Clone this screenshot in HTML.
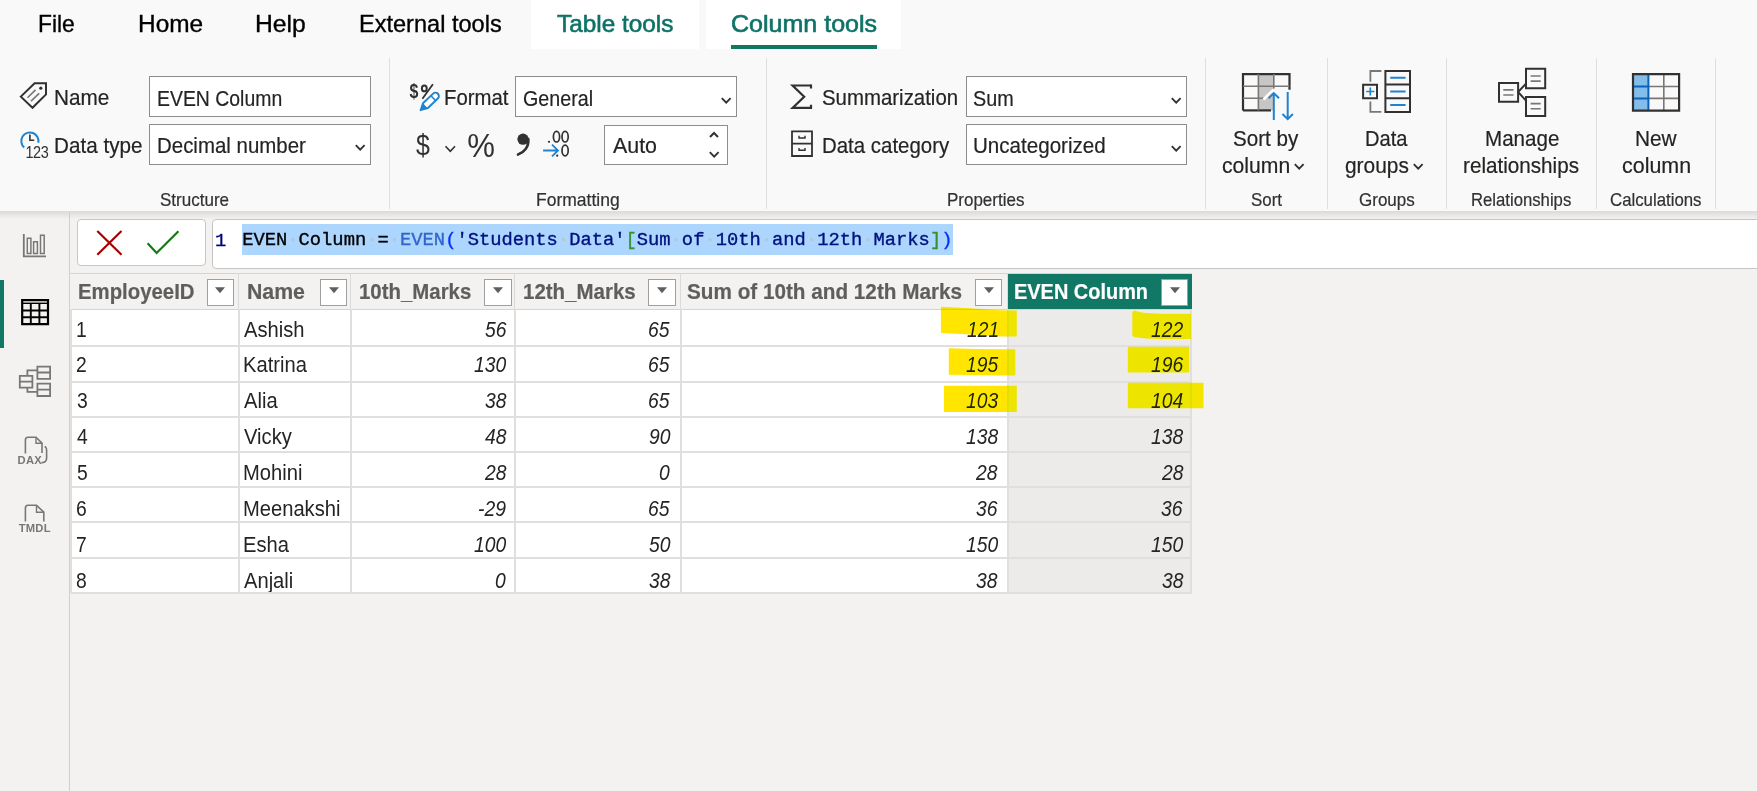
<!DOCTYPE html><html><head><meta charset="utf-8"><style>
html,body{margin:0;padding:0;}
body{width:1757px;height:791px;position:relative;overflow:hidden;background:#f3f2f1;font-family:'Liberation Sans', sans-serif;}
div{-webkit-text-stroke:0.2px currentColor;}
</style></head><body>
<div style="position:absolute;left:0px;top:0px;width:1757px;height:211px;background:#f9f9f9;"></div><div style="position:absolute;left:531px;top:0px;width:168px;height:48.5px;background:#ffffff;"></div><div style="position:absolute;left:706px;top:0px;width:195px;height:48.5px;background:#ffffff;"></div><div style="position:absolute;left:731.4px;top:44.5px;width:145.30000000000007px;height:4.0px;background:#117865;"></div><div style="position:absolute;left:0px;top:211px;width:1757px;height:8px;background:linear-gradient(#dcdad8,#f3f2f1);"></div><div style="position:absolute;top:9.72px;font-family:'Liberation Sans', sans-serif;font-size:24.13px;line-height:28.96px;color:#000;white-space:pre;left:37.57px;transform:scaleX(0.9461);transform-origin:0 0;-webkit-text-stroke:0.35px currentColor;">File</div><div style="position:absolute;top:9.72px;font-family:'Liberation Sans', sans-serif;font-size:24.13px;line-height:28.96px;color:#000;white-space:pre;left:138.25px;transform:scaleX(1.0117);transform-origin:0 0;-webkit-text-stroke:0.35px currentColor;">Home</div><div style="position:absolute;top:9.72px;font-family:'Liberation Sans', sans-serif;font-size:24.13px;line-height:28.96px;color:#000;white-space:pre;left:255.12px;transform:scaleX(1.0238);transform-origin:0 0;-webkit-text-stroke:0.35px currentColor;">Help</div><div style="position:absolute;top:9.72px;font-family:'Liberation Sans', sans-serif;font-size:24.13px;line-height:28.96px;color:#000;white-space:pre;left:359.32px;transform:scaleX(0.9760);transform-origin:0 0;-webkit-text-stroke:0.35px currentColor;">External tools</div><div style="position:absolute;top:9.72px;font-family:'Liberation Sans', sans-serif;font-size:24.13px;line-height:28.96px;color:#0e7266;white-space:pre;left:557.11px;transform:scaleX(1.0087);transform-origin:0 0;-webkit-text-stroke:0.6px currentColor;">Table tools</div><div style="position:absolute;top:9.72px;font-family:'Liberation Sans', sans-serif;font-size:24.13px;line-height:28.96px;color:#0e7266;white-space:pre;left:730.55px;transform:scaleX(1.0379);transform-origin:0 0;-webkit-text-stroke:0.6px currentColor;">Column tools</div><div style="position:absolute;left:389px;top:58px;width:1px;height:151px;background:#e1dfdd;"></div><div style="position:absolute;left:766px;top:58px;width:1px;height:151px;background:#e1dfdd;"></div><div style="position:absolute;left:1205px;top:58px;width:1px;height:151px;background:#e1dfdd;"></div><div style="position:absolute;left:1327px;top:58px;width:1px;height:151px;background:#e1dfdd;"></div><div style="position:absolute;left:1446px;top:58px;width:1px;height:151px;background:#e1dfdd;"></div><div style="position:absolute;left:1596px;top:58px;width:1px;height:151px;background:#e1dfdd;"></div><div style="position:absolute;left:1715px;top:58px;width:1px;height:151px;background:#e1dfdd;"></div><div style="position:absolute;top:85.22px;font-family:'Liberation Sans', sans-serif;font-size:21.8px;line-height:26.16px;color:#252423;white-space:pre;left:54.44px;transform:scaleX(0.9516);transform-origin:0 0;">Name</div><div style="position:absolute;top:133.22px;font-family:'Liberation Sans', sans-serif;font-size:21.8px;line-height:26.16px;color:#252423;white-space:pre;left:54.35px;transform:scaleX(0.9482);transform-origin:0 0;">Data type</div><div style="position:absolute;left:149.2px;top:76px;width:221.8px;height:41px;background:#fff;border:1.5px solid #8f8d8b;box-sizing:border-box;"></div><div style="position:absolute;left:149.2px;top:124px;width:221.8px;height:41px;background:#fff;border:1.5px solid #8f8d8b;box-sizing:border-box;"></div><div style="position:absolute;top:85.72px;font-family:'Liberation Sans', sans-serif;font-size:21.8px;line-height:26.16px;color:#252423;white-space:pre;left:157.45px;transform:scaleX(0.8911);transform-origin:0 0;">EVEN Column</div><div style="position:absolute;top:133.42px;font-family:'Liberation Sans', sans-serif;font-size:21.8px;line-height:26.16px;color:#252423;white-space:pre;left:157.36px;transform:scaleX(0.9378);transform-origin:0 0;">Decimal number</div><svg style="position:absolute;left:355px;top:144px;" width="11" height="7" viewBox="0 0 11 7"><path d="M0.8 1.2 L5.2 5.6 L9.6 1.2" fill="none" stroke="#323130" stroke-width="1.9"/></svg><div style="position:absolute;top:190.25px;font-family:'Liberation Sans', sans-serif;font-size:17.59px;line-height:21.11px;color:#323130;white-space:pre;left:159.73px;transform:scaleX(0.9680);transform-origin:0 0;">Structure</div><div style="position:absolute;top:85.02px;font-family:'Liberation Sans', sans-serif;font-size:21.8px;line-height:26.16px;color:#252423;white-space:pre;left:444.17px;transform:scaleX(0.9322);transform-origin:0 0;">Format</div><div style="position:absolute;left:515.2px;top:76px;width:221.79999999999995px;height:41px;background:#fff;border:1.5px solid #8f8d8b;box-sizing:border-box;"></div><div style="position:absolute;top:85.72px;font-family:'Liberation Sans', sans-serif;font-size:21.8px;line-height:26.16px;color:#252423;white-space:pre;left:523.32px;transform:scaleX(0.9027);transform-origin:0 0;">General</div><svg style="position:absolute;left:721px;top:97px;" width="11" height="7" viewBox="0 0 11 7"><path d="M0.8 1.2 L5.2 5.6 L9.6 1.2" fill="none" stroke="#323130" stroke-width="1.9"/></svg><div style="position:absolute;left:604.2px;top:125px;width:123.39999999999998px;height:40px;background:#fff;border:1.5px solid #8f8d8b;box-sizing:border-box;"></div><div style="position:absolute;top:133.22px;font-family:'Liberation Sans', sans-serif;font-size:21.8px;line-height:26.16px;color:#252423;white-space:pre;left:613.4px;transform:scaleX(0.9811);transform-origin:0 0;">Auto</div><svg style="position:absolute;left:709px;top:131px;" width="11" height="7" viewBox="0 0 11 7"><path d="M1 6 L5 2 L9 6" fill="none" stroke="#323130" stroke-width="2"/></svg><svg style="position:absolute;left:709px;top:151.3px;" width="11" height="7" viewBox="0 0 11 7"><path d="M0.8 1.2 L5.2 5.6 L9.6 1.2" fill="none" stroke="#323130" stroke-width="1.9"/></svg><div style="position:absolute;top:190.25px;font-family:'Liberation Sans', sans-serif;font-size:17.59px;line-height:21.11px;color:#323130;white-space:pre;left:535.9px;transform:scaleX(0.9961);transform-origin:0 0;">Formatting</div><div style="position:absolute;top:85.22px;font-family:'Liberation Sans', sans-serif;font-size:21.8px;line-height:26.16px;color:#252423;white-space:pre;left:822.48px;transform:scaleX(0.9362);transform-origin:0 0;">Summarization</div><div style="position:absolute;top:133.22px;font-family:'Liberation Sans', sans-serif;font-size:21.8px;line-height:26.16px;color:#252423;white-space:pre;left:821.76px;transform:scaleX(0.9375);transform-origin:0 0;">Data category</div><div style="position:absolute;left:965.5px;top:76px;width:221.5px;height:41px;background:#fff;border:1.5px solid #8f8d8b;box-sizing:border-box;"></div><div style="position:absolute;left:965.5px;top:124px;width:221.5px;height:41px;background:#fff;border:1.5px solid #8f8d8b;box-sizing:border-box;"></div><div style="position:absolute;top:86.22px;font-family:'Liberation Sans', sans-serif;font-size:21.8px;line-height:26.16px;color:#252423;white-space:pre;left:973.11px;transform:scaleX(0.9079);transform-origin:0 0;">Sum</div><div style="position:absolute;top:133.42px;font-family:'Liberation Sans', sans-serif;font-size:21.8px;line-height:26.16px;color:#252423;white-space:pre;left:972.76px;transform:scaleX(0.9442);transform-origin:0 0;">Uncategorized</div><svg style="position:absolute;left:1171px;top:97px;" width="11" height="7" viewBox="0 0 11 7"><path d="M0.8 1.2 L5.2 5.6 L9.6 1.2" fill="none" stroke="#323130" stroke-width="1.9"/></svg><svg style="position:absolute;left:1171px;top:145px;" width="11" height="7" viewBox="0 0 11 7"><path d="M0.8 1.2 L5.2 5.6 L9.6 1.2" fill="none" stroke="#323130" stroke-width="1.9"/></svg><div style="position:absolute;top:190.25px;font-family:'Liberation Sans', sans-serif;font-size:17.59px;line-height:21.11px;color:#323130;white-space:pre;left:947.04px;transform:scaleX(0.9658);transform-origin:0 0;">Properties</div><div style="position:absolute;top:126.12px;font-family:'Liberation Sans', sans-serif;font-size:21.8px;line-height:26.16px;color:#252423;white-space:pre;left:1233.37px;transform:scaleX(0.9467);transform-origin:0 0;">Sort by</div><div style="position:absolute;top:153.02px;font-family:'Liberation Sans', sans-serif;font-size:21.8px;line-height:26.16px;color:#252423;white-space:pre;left:1222.35px;transform:scaleX(0.9703);transform-origin:0 0;">column</div><svg style="position:absolute;left:1294px;top:163px;" width="11" height="7" viewBox="0 0 11 7"><path d="M0.8 1.2 L5.2 5.6 L9.6 1.2" fill="none" stroke="#323130" stroke-width="1.9"/></svg><div style="position:absolute;top:190.04px;font-family:'Liberation Sans', sans-serif;font-size:17.59px;line-height:21.11px;color:#323130;white-space:pre;left:1250.74px;transform:scaleX(0.9615);transform-origin:0 0;">Sort</div><div style="position:absolute;top:126.12px;font-family:'Liberation Sans', sans-serif;font-size:21.8px;line-height:26.16px;color:#252423;white-space:pre;left:1365.39px;transform:scaleX(0.9219);transform-origin:0 0;">Data</div><div style="position:absolute;top:153.02px;font-family:'Liberation Sans', sans-serif;font-size:21.8px;line-height:26.16px;color:#252423;white-space:pre;left:1344.96px;transform:scaleX(0.9588);transform-origin:0 0;">groups</div><svg style="position:absolute;left:1413px;top:163px;" width="11" height="7" viewBox="0 0 11 7"><path d="M0.8 1.2 L5.2 5.6 L9.6 1.2" fill="none" stroke="#323130" stroke-width="1.9"/></svg><div style="position:absolute;top:190.04px;font-family:'Liberation Sans', sans-serif;font-size:17.59px;line-height:21.11px;color:#323130;white-space:pre;left:1359.05px;transform:scaleX(0.9681);transform-origin:0 0;">Groups</div><div style="position:absolute;top:126.12px;font-family:'Liberation Sans', sans-serif;font-size:21.8px;line-height:26.16px;color:#252423;white-space:pre;left:1484.75px;transform:scaleX(0.9436);transform-origin:0 0;">Manage</div><div style="position:absolute;top:153.02px;font-family:'Liberation Sans', sans-serif;font-size:21.8px;line-height:26.16px;color:#252423;white-space:pre;left:1463.06px;transform:scaleX(0.9481);transform-origin:0 0;">relationships</div><div style="position:absolute;top:190.04px;font-family:'Liberation Sans', sans-serif;font-size:17.59px;line-height:21.11px;color:#323130;white-space:pre;left:1470.86px;transform:scaleX(0.9499);transform-origin:0 0;">Relationships</div><div style="position:absolute;top:126.12px;font-family:'Liberation Sans', sans-serif;font-size:21.8px;line-height:26.16px;color:#252423;white-space:pre;left:1635.03px;transform:scaleX(0.9555);transform-origin:0 0;">New</div><div style="position:absolute;top:153.02px;font-family:'Liberation Sans', sans-serif;font-size:21.8px;line-height:26.16px;color:#252423;white-space:pre;left:1621.94px;transform:scaleX(0.9835);transform-origin:0 0;">column</div><div style="position:absolute;top:190.04px;font-family:'Liberation Sans', sans-serif;font-size:17.59px;line-height:21.11px;color:#323130;white-space:pre;left:1610.36px;transform:scaleX(0.9558);transform-origin:0 0;">Calculations</div><div style="position:absolute;left:0px;top:219px;width:1757px;height:572px;background:#f3f2f1;"></div><div style="position:absolute;left:69px;top:211.5px;width:1px;height:579.5px;background:#d2d0ce;"></div><div style="position:absolute;left:0px;top:280px;width:4px;height:68px;background:#117865;"></div><div style="position:absolute;left:77px;top:218.5px;width:129px;height:47.5px;background:#fff;border:1.5px solid #c8c6c4;border-radius:4px;box-sizing:border-box;"></div><div style="position:absolute;left:212px;top:218.5px;width:1588px;height:50.5px;background:#fff;border:1.5px solid #c8c6c4;border-radius:4px;box-sizing:border-box;"></div><div style="position:absolute;top:229.52px;font-family:'Liberation Mono', monospace;font-size:18.8px;line-height:22.56px;color:#000080;white-space:pre;left:215px;-webkit-text-stroke:0.35px currentColor;">1</div><div style="position:absolute;left:242px;top:224px;width:711px;height:31px;background:#add6ff;"></div><div style="position:absolute;left:70px;top:273px;width:1121.7px;height:36.30000000000001px;background:#f3f2f1;"></div><div style="position:absolute;left:70.5px;top:309.3px;width:937.0px;height:283.7px;background:#fff;"></div><div style="position:absolute;left:1007.5px;top:309.3px;width:184.20000000000005px;height:283.7px;background:#edebe9;"></div><div style="position:absolute;left:1007.5px;top:274px;width:184.70000000000005px;height:36.0px;background:#117865;"></div><div style="position:absolute;top:278.00px;font-family:'Liberation Sans', sans-serif;font-size:22.67px;line-height:27.2px;color:#605e5c;white-space:pre;font-weight:700;left:77.68px;transform:scaleX(0.8985);transform-origin:0 0;">EmployeeID</div><div style="position:absolute;top:278.00px;font-family:'Liberation Sans', sans-serif;font-size:22.67px;line-height:27.2px;color:#605e5c;white-space:pre;font-weight:700;left:247.12px;transform:scaleX(0.9392);transform-origin:0 0;">Name</div><div style="position:absolute;top:278.00px;font-family:'Liberation Sans', sans-serif;font-size:22.67px;line-height:27.2px;color:#605e5c;white-space:pre;font-weight:700;left:358.77px;transform:scaleX(0.9008);transform-origin:0 0;">10th_Marks</div><div style="position:absolute;top:278.00px;font-family:'Liberation Sans', sans-serif;font-size:22.67px;line-height:27.2px;color:#605e5c;white-space:pre;font-weight:700;left:522.97px;transform:scaleX(0.9041);transform-origin:0 0;">12th_Marks</div><div style="position:absolute;top:278.00px;font-family:'Liberation Sans', sans-serif;font-size:22.67px;line-height:27.2px;color:#605e5c;white-space:pre;font-weight:700;left:687.18px;transform:scaleX(0.9141);transform-origin:0 0;">Sum of 10th and 12th Marks</div><div style="position:absolute;top:278.00px;font-family:'Liberation Sans', sans-serif;font-size:22.67px;line-height:27.2px;color:#fff;white-space:pre;font-weight:700;left:1013.7px;transform:scaleX(0.8800);transform-origin:0 0;">EVEN Column</div><div style="position:absolute;left:206.6px;top:278.8px;width:27.400000000000006px;height:27.0px;background:#fff;border:1.5px solid #a19f9d;box-sizing:border-box;"></div><svg style="position:absolute;left:215.29999999999998px;top:287.2px;" width="10" height="7" viewBox="0 0 10 7"><path d="M0 0.3 L10 0.3 L5 6.3 Z" fill="#605e5c"/></svg><div style="position:absolute;left:320px;top:278.8px;width:27.399999999999977px;height:27.0px;background:#fff;border:1.5px solid #a19f9d;box-sizing:border-box;"></div><svg style="position:absolute;left:328.7px;top:287.2px;" width="10" height="7" viewBox="0 0 10 7"><path d="M0 0.3 L10 0.3 L5 6.3 Z" fill="#605e5c"/></svg><div style="position:absolute;left:484.2px;top:278.8px;width:27.399999999999977px;height:27.0px;background:#fff;border:1.5px solid #a19f9d;box-sizing:border-box;"></div><svg style="position:absolute;left:492.9px;top:287.2px;" width="10" height="7" viewBox="0 0 10 7"><path d="M0 0.3 L10 0.3 L5 6.3 Z" fill="#605e5c"/></svg><div style="position:absolute;left:648.2px;top:278.8px;width:27.399999999999977px;height:27.0px;background:#fff;border:1.5px solid #a19f9d;box-sizing:border-box;"></div><svg style="position:absolute;left:656.9000000000001px;top:287.2px;" width="10" height="7" viewBox="0 0 10 7"><path d="M0 0.3 L10 0.3 L5 6.3 Z" fill="#605e5c"/></svg><div style="position:absolute;left:975px;top:278.8px;width:27.399999999999977px;height:27.0px;background:#fff;border:1.5px solid #a19f9d;box-sizing:border-box;"></div><svg style="position:absolute;left:983.7px;top:287.2px;" width="10" height="7" viewBox="0 0 10 7"><path d="M0 0.3 L10 0.3 L5 6.3 Z" fill="#605e5c"/></svg><div style="position:absolute;left:1161px;top:278.8px;width:27.40000000000009px;height:27.0px;background:#fff;border:1.5px solid #a19f9d;box-sizing:border-box;"></div><svg style="position:absolute;left:1169.7px;top:287.2px;" width="10" height="7" viewBox="0 0 10 7"><path d="M0 0.3 L10 0.3 L5 6.3 Z" fill="#605e5c"/></svg><div style="position:absolute;top:317.63px;font-family:'Liberation Sans', sans-serif;font-size:21.45px;line-height:25.74px;color:#252423;white-space:pre;left:75.85px;transform:scaleX(0.9000);transform-origin:0 0;-webkit-text-stroke:0;">1</div><div style="position:absolute;top:317.63px;font-family:'Liberation Sans', sans-serif;font-size:21.45px;line-height:25.74px;color:#252423;white-space:pre;left:244.2px;transform:scaleX(0.9400);transform-origin:0 0;-webkit-text-stroke:0;">Ashish</div><div style="position:absolute;top:317.63px;font-family:'Liberation Sans', sans-serif;font-size:21.45px;line-height:25.74px;color:#252423;white-space:pre;font-style:italic;left:484.57px;transform:scaleX(0.9000);transform-origin:0 0;-webkit-text-stroke:0;">56</div><div style="position:absolute;top:317.63px;font-family:'Liberation Sans', sans-serif;font-size:21.45px;line-height:25.74px;color:#252423;white-space:pre;font-style:italic;left:648.48px;transform:scaleX(0.9000);transform-origin:0 0;-webkit-text-stroke:0;">65</div><div style="position:absolute;top:317.63px;font-family:'Liberation Sans', sans-serif;font-size:21.45px;line-height:25.74px;color:#252423;white-space:pre;font-style:italic;left:967.3px;transform:scaleX(0.9000);transform-origin:0 0;-webkit-text-stroke:0;">121</div><div style="position:absolute;top:317.63px;font-family:'Liberation Sans', sans-serif;font-size:21.45px;line-height:25.74px;color:#252423;white-space:pre;font-style:italic;left:1151.05px;transform:scaleX(0.9000);transform-origin:0 0;-webkit-text-stroke:0;">122</div><div style="position:absolute;top:353.43px;font-family:'Liberation Sans', sans-serif;font-size:21.45px;line-height:25.74px;color:#252423;white-space:pre;left:76.33px;transform:scaleX(0.9000);transform-origin:0 0;-webkit-text-stroke:0;">2</div><div style="position:absolute;top:353.43px;font-family:'Liberation Sans', sans-serif;font-size:21.45px;line-height:25.74px;color:#252423;white-space:pre;left:242.59px;transform:scaleX(0.9400);transform-origin:0 0;-webkit-text-stroke:0;">Katrina</div><div style="position:absolute;top:353.43px;font-family:'Liberation Sans', sans-serif;font-size:21.45px;line-height:25.74px;color:#252423;white-space:pre;font-style:italic;left:473.95px;transform:scaleX(0.9000);transform-origin:0 0;-webkit-text-stroke:0;">130</div><div style="position:absolute;top:353.43px;font-family:'Liberation Sans', sans-serif;font-size:21.45px;line-height:25.74px;color:#252423;white-space:pre;font-style:italic;left:648.48px;transform:scaleX(0.9000);transform-origin:0 0;-webkit-text-stroke:0;">65</div><div style="position:absolute;top:353.43px;font-family:'Liberation Sans', sans-serif;font-size:21.45px;line-height:25.74px;color:#252423;white-space:pre;font-style:italic;left:965.56px;transform:scaleX(0.9000);transform-origin:0 0;-webkit-text-stroke:0;">195</div><div style="position:absolute;top:353.43px;font-family:'Liberation Sans', sans-serif;font-size:21.45px;line-height:25.74px;color:#252423;white-space:pre;font-style:italic;left:1150.76px;transform:scaleX(0.9000);transform-origin:0 0;-webkit-text-stroke:0;">196</div><div style="position:absolute;top:388.83px;font-family:'Liberation Sans', sans-serif;font-size:21.45px;line-height:25.74px;color:#252423;white-space:pre;left:76.53px;transform:scaleX(0.9000);transform-origin:0 0;-webkit-text-stroke:0;">3</div><div style="position:absolute;top:388.83px;font-family:'Liberation Sans', sans-serif;font-size:21.45px;line-height:25.74px;color:#252423;white-space:pre;left:244.2px;transform:scaleX(0.9400);transform-origin:0 0;-webkit-text-stroke:0;">Alia</div><div style="position:absolute;top:388.83px;font-family:'Liberation Sans', sans-serif;font-size:21.45px;line-height:25.74px;color:#252423;white-space:pre;font-style:italic;left:484.67px;transform:scaleX(0.9000);transform-origin:0 0;-webkit-text-stroke:0;">38</div><div style="position:absolute;top:388.83px;font-family:'Liberation Sans', sans-serif;font-size:21.45px;line-height:25.74px;color:#252423;white-space:pre;font-style:italic;left:648.48px;transform:scaleX(0.9000);transform-origin:0 0;-webkit-text-stroke:0;">65</div><div style="position:absolute;top:388.83px;font-family:'Liberation Sans', sans-serif;font-size:21.45px;line-height:25.74px;color:#252423;white-space:pre;font-style:italic;left:965.75px;transform:scaleX(0.9000);transform-origin:0 0;-webkit-text-stroke:0;">103</div><div style="position:absolute;top:388.83px;font-family:'Liberation Sans', sans-serif;font-size:21.45px;line-height:25.74px;color:#252423;white-space:pre;font-style:italic;left:1151.43px;transform:scaleX(0.9000);transform-origin:0 0;-webkit-text-stroke:0;">104</div><div style="position:absolute;top:424.73px;font-family:'Liberation Sans', sans-serif;font-size:21.45px;line-height:25.74px;color:#252423;white-space:pre;left:76.91px;transform:scaleX(0.9000);transform-origin:0 0;-webkit-text-stroke:0;">4</div><div style="position:absolute;top:424.73px;font-family:'Liberation Sans', sans-serif;font-size:21.45px;line-height:25.74px;color:#252423;white-space:pre;left:244.1px;transform:scaleX(0.9400);transform-origin:0 0;-webkit-text-stroke:0;">Vicky</div><div style="position:absolute;top:424.73px;font-family:'Liberation Sans', sans-serif;font-size:21.45px;line-height:25.74px;color:#252423;white-space:pre;font-style:italic;left:484.67px;transform:scaleX(0.9000);transform-origin:0 0;-webkit-text-stroke:0;">48</div><div style="position:absolute;top:424.73px;font-family:'Liberation Sans', sans-serif;font-size:21.45px;line-height:25.74px;color:#252423;white-space:pre;font-style:italic;left:648.67px;transform:scaleX(0.9000);transform-origin:0 0;-webkit-text-stroke:0;">90</div><div style="position:absolute;top:424.73px;font-family:'Liberation Sans', sans-serif;font-size:21.45px;line-height:25.74px;color:#252423;white-space:pre;font-style:italic;left:965.75px;transform:scaleX(0.9000);transform-origin:0 0;-webkit-text-stroke:0;">138</div><div style="position:absolute;top:424.73px;font-family:'Liberation Sans', sans-serif;font-size:21.45px;line-height:25.74px;color:#252423;white-space:pre;font-style:italic;left:1150.85px;transform:scaleX(0.9000);transform-origin:0 0;-webkit-text-stroke:0;">138</div><div style="position:absolute;top:461.23px;font-family:'Liberation Sans', sans-serif;font-size:21.45px;line-height:25.74px;color:#252423;white-space:pre;left:76.53px;transform:scaleX(0.9000);transform-origin:0 0;-webkit-text-stroke:0;">5</div><div style="position:absolute;top:461.23px;font-family:'Liberation Sans', sans-serif;font-size:21.45px;line-height:25.74px;color:#252423;white-space:pre;left:242.59px;transform:scaleX(0.9400);transform-origin:0 0;-webkit-text-stroke:0;">Mohini</div><div style="position:absolute;top:461.23px;font-family:'Liberation Sans', sans-serif;font-size:21.45px;line-height:25.74px;color:#252423;white-space:pre;font-style:italic;left:484.67px;transform:scaleX(0.9000);transform-origin:0 0;-webkit-text-stroke:0;">28</div><div style="position:absolute;top:461.23px;font-family:'Liberation Sans', sans-serif;font-size:21.45px;line-height:25.74px;color:#252423;white-space:pre;font-style:italic;left:659.38px;transform:scaleX(0.9000);transform-origin:0 0;-webkit-text-stroke:0;">0</div><div style="position:absolute;top:461.23px;font-family:'Liberation Sans', sans-serif;font-size:21.45px;line-height:25.74px;color:#252423;white-space:pre;font-style:italic;left:976.47px;transform:scaleX(0.9000);transform-origin:0 0;-webkit-text-stroke:0;">28</div><div style="position:absolute;top:461.23px;font-family:'Liberation Sans', sans-serif;font-size:21.45px;line-height:25.74px;color:#252423;white-space:pre;font-style:italic;left:1161.57px;transform:scaleX(0.9000);transform-origin:0 0;-webkit-text-stroke:0;">28</div><div style="position:absolute;top:496.53px;font-family:'Liberation Sans', sans-serif;font-size:21.45px;line-height:25.74px;color:#252423;white-space:pre;left:76.33px;transform:scaleX(0.9000);transform-origin:0 0;-webkit-text-stroke:0;">6</div><div style="position:absolute;top:496.53px;font-family:'Liberation Sans', sans-serif;font-size:21.45px;line-height:25.74px;color:#252423;white-space:pre;left:242.59px;transform:scaleX(0.9400);transform-origin:0 0;-webkit-text-stroke:0;">Meenakshi</div><div style="position:absolute;top:496.53px;font-family:'Liberation Sans', sans-serif;font-size:21.45px;line-height:25.74px;color:#252423;white-space:pre;font-style:italic;left:478.49px;transform:scaleX(0.9000);transform-origin:0 0;-webkit-text-stroke:0;">-29</div><div style="position:absolute;top:496.53px;font-family:'Liberation Sans', sans-serif;font-size:21.45px;line-height:25.74px;color:#252423;white-space:pre;font-style:italic;left:648.48px;transform:scaleX(0.9000);transform-origin:0 0;-webkit-text-stroke:0;">65</div><div style="position:absolute;top:496.53px;font-family:'Liberation Sans', sans-serif;font-size:21.45px;line-height:25.74px;color:#252423;white-space:pre;font-style:italic;left:976.37px;transform:scaleX(0.9000);transform-origin:0 0;-webkit-text-stroke:0;">36</div><div style="position:absolute;top:496.53px;font-family:'Liberation Sans', sans-serif;font-size:21.45px;line-height:25.74px;color:#252423;white-space:pre;font-style:italic;left:1161.47px;transform:scaleX(0.9000);transform-origin:0 0;-webkit-text-stroke:0;">36</div><div style="position:absolute;top:532.63px;font-family:'Liberation Sans', sans-serif;font-size:21.45px;line-height:25.74px;color:#252423;white-space:pre;left:76.33px;transform:scaleX(0.9000);transform-origin:0 0;-webkit-text-stroke:0;">7</div><div style="position:absolute;top:532.63px;font-family:'Liberation Sans', sans-serif;font-size:21.45px;line-height:25.74px;color:#252423;white-space:pre;left:242.59px;transform:scaleX(0.9400);transform-origin:0 0;-webkit-text-stroke:0;">Esha</div><div style="position:absolute;top:532.63px;font-family:'Liberation Sans', sans-serif;font-size:21.45px;line-height:25.74px;color:#252423;white-space:pre;font-style:italic;left:473.95px;transform:scaleX(0.9000);transform-origin:0 0;-webkit-text-stroke:0;">100</div><div style="position:absolute;top:532.63px;font-family:'Liberation Sans', sans-serif;font-size:21.45px;line-height:25.74px;color:#252423;white-space:pre;font-style:italic;left:648.67px;transform:scaleX(0.9000);transform-origin:0 0;-webkit-text-stroke:0;">50</div><div style="position:absolute;top:532.63px;font-family:'Liberation Sans', sans-serif;font-size:21.45px;line-height:25.74px;color:#252423;white-space:pre;font-style:italic;left:965.75px;transform:scaleX(0.9000);transform-origin:0 0;-webkit-text-stroke:0;">150</div><div style="position:absolute;top:532.63px;font-family:'Liberation Sans', sans-serif;font-size:21.45px;line-height:25.74px;color:#252423;white-space:pre;font-style:italic;left:1150.85px;transform:scaleX(0.9000);transform-origin:0 0;-webkit-text-stroke:0;">150</div><div style="position:absolute;top:568.63px;font-family:'Liberation Sans', sans-serif;font-size:21.45px;line-height:25.74px;color:#252423;white-space:pre;left:76.43px;transform:scaleX(0.9000);transform-origin:0 0;-webkit-text-stroke:0;">8</div><div style="position:absolute;top:568.63px;font-family:'Liberation Sans', sans-serif;font-size:21.45px;line-height:25.74px;color:#252423;white-space:pre;left:244.2px;transform:scaleX(0.9400);transform-origin:0 0;-webkit-text-stroke:0;">Anjali</div><div style="position:absolute;top:568.63px;font-family:'Liberation Sans', sans-serif;font-size:21.45px;line-height:25.74px;color:#252423;white-space:pre;font-style:italic;left:495.38px;transform:scaleX(0.9000);transform-origin:0 0;-webkit-text-stroke:0;">0</div><div style="position:absolute;top:568.63px;font-family:'Liberation Sans', sans-serif;font-size:21.45px;line-height:25.74px;color:#252423;white-space:pre;font-style:italic;left:648.67px;transform:scaleX(0.9000);transform-origin:0 0;-webkit-text-stroke:0;">38</div><div style="position:absolute;top:568.63px;font-family:'Liberation Sans', sans-serif;font-size:21.45px;line-height:25.74px;color:#252423;white-space:pre;font-style:italic;left:976.47px;transform:scaleX(0.9000);transform-origin:0 0;-webkit-text-stroke:0;">38</div><div style="position:absolute;top:568.63px;font-family:'Liberation Sans', sans-serif;font-size:21.45px;line-height:25.74px;color:#252423;white-space:pre;font-style:italic;left:1161.57px;transform:scaleX(0.9000);transform-origin:0 0;-webkit-text-stroke:0;">38</div><div style="position:absolute;left:70px;top:273px;width:1122.2px;height:1px;background:#d6d4d2;"></div><div style="position:absolute;left:70px;top:308.8px;width:1122.2px;height:1.1999999999999886px;background:#d6d4d2;"></div><div style="position:absolute;left:237.5px;top:273px;width:1.0px;height:36.30000000000001px;background:#dcdad8;"></div><div style="position:absolute;left:349.5px;top:273px;width:1.0px;height:36.30000000000001px;background:#dcdad8;"></div><div style="position:absolute;left:513.5px;top:273px;width:1.0px;height:36.30000000000001px;background:#dcdad8;"></div><div style="position:absolute;left:679.5px;top:273px;width:1.0px;height:36.30000000000001px;background:#dcdad8;"></div><div style="position:absolute;left:1006.5px;top:273px;width:1.0px;height:36.30000000000001px;background:#dcdad8;"></div><div style="position:absolute;left:70.5px;top:344.5px;width:1121.2px;height:2.0px;background:#e1dfdd;"></div><div style="position:absolute;left:70.5px;top:380.5px;width:1121.2px;height:2.0px;background:#e1dfdd;"></div><div style="position:absolute;left:70.5px;top:416.2px;width:1121.2px;height:2.0px;background:#e1dfdd;"></div><div style="position:absolute;left:70.5px;top:450.9px;width:1121.2px;height:2.0px;background:#e1dfdd;"></div><div style="position:absolute;left:70.5px;top:486.1px;width:1121.2px;height:2.0px;background:#e1dfdd;"></div><div style="position:absolute;left:70.5px;top:521.4px;width:1121.2px;height:2.0px;background:#e1dfdd;"></div><div style="position:absolute;left:70.5px;top:557.3px;width:1121.2px;height:2.0px;background:#e1dfdd;"></div><div style="position:absolute;left:70.5px;top:592px;width:1121.2px;height:2px;background:#e1dfdd;"></div><div style="position:absolute;left:69.5px;top:309.3px;width:2.0px;height:283.7px;background:#e1dfdd;"></div><div style="position:absolute;left:237.5px;top:309.3px;width:2.0px;height:283.7px;background:#e1dfdd;"></div><div style="position:absolute;left:349.5px;top:309.3px;width:2.0px;height:283.7px;background:#e1dfdd;"></div><div style="position:absolute;left:513.5px;top:309.3px;width:2.0px;height:283.7px;background:#e1dfdd;"></div><div style="position:absolute;left:679.5px;top:309.3px;width:2.0px;height:283.7px;background:#e1dfdd;"></div><div style="position:absolute;left:1006.5px;top:309.3px;width:2.0px;height:283.7px;background:#e1dfdd;"></div><div style="position:absolute;left:1190.2px;top:309.3px;width:2.0px;height:283.7px;background:#e1dfdd;"></div><div style="position:absolute;top:229.42px;font-family:'Liberation Mono', monospace;font-size:18.8px;line-height:22.56px;color:#000;white-space:pre;left:242.2px;-webkit-text-stroke:0.35px currentColor;"><span style="color:#000">EVEN</span><span style="color:#b8c4d0">·</span><span style="color:#000">Column</span><span style="color:#b8c4d0">·</span><span style="color:#000">=</span><span style="color:#b8c4d0">·</span><span style="color:#3165cc">EVEN</span><span style="color:#0431fa">(</span><span style="color:#001080">'Students</span><span style="color:#b8c4d0">·</span><span style="color:#001080">Data'</span><span style="color:#319331">[</span><span style="color:#001080">Sum</span><span style="color:#b8c4d0">·</span><span style="color:#001080">of</span><span style="color:#b8c4d0">·</span><span style="color:#001080">10th</span><span style="color:#b8c4d0">·</span><span style="color:#001080">and</span><span style="color:#b8c4d0">·</span><span style="color:#001080">12th</span><span style="color:#b8c4d0">·</span><span style="color:#001080">Marks</span><span style="color:#319331">]</span><span style="color:#0431fa">)</span></div><svg style="position:absolute;left:0;top:0" width="1757" height="791" viewBox="0 0 1757 791"><path d="M20.8 96.6 L34.6 83.3 L46 83.3 L46 94.4 L32.5 107.8 Z" fill="none" stroke="#323130" stroke-width="2" stroke-linejoin="miter"/><path d="M27.5 97.7 L35.5 89.9" fill="none" stroke="#797775" stroke-width="1.6" /><path d="M31 101.2 L39.2 93.4" fill="none" stroke="#797775" stroke-width="1.6" /><circle cx="40.8" cy="88.2" r="1.6" fill="#323130"/><path d="M24.2 147.5 A8.6 8.6 0 1 1 38.3 142.8" fill="none" stroke="#1e83d2" stroke-width="2" /><path d="M29.9 134.5 L29.9 140.3 L34.2 140.3" fill="none" stroke="#323130" stroke-width="1.6" /><text x="25.4" y="157.6" font-family="Liberation Sans" font-size="16.4" fill="#323130" letter-spacing="-0.4" transform="translate(25.4 157.6) scale(0.88 1) translate(-25.4 -157.6)">123</text><text x="409.6" y="97.6" font-family="Liberation Sans" font-weight="700" font-size="19.5" fill="#323130" transform="translate(409.6 97.6) scale(0.82 1) translate(-409.6 -97.6)">$</text><ellipse cx="424.3" cy="88.4" rx="2.4" ry="2.9" fill="none" stroke="#323130" stroke-width="2"/><path d="M422.4 98.8 L432.9 84.3" fill="none" stroke="#323130" stroke-width="1.8" /><g transform="translate(420.6 110.2) rotate(-43.5)"><path d="M0 0 L6.5 -3.4 L20.5 -3.4 A3.4 3.4 0 0 1 20.5 3.4 L6.5 3.4 Z" fill="#fff" stroke="#1e83d2" stroke-width="1.9" stroke-linejoin="round"/><path d="M0 0 L6.5 -3.4 L6.5 3.4 Z" fill="#1e83d2"/><path d="M17.5 -3.4 L17.5 3.4" stroke="#1e83d2" stroke-width="1.5"/></g><text x="416" y="154.8" font-family="Liberation Sans" font-size="29" fill="#323130" transform="translate(416 154.8) scale(0.86 1) translate(-416 -154.8)">$</text><path d="M445.5 146.2 L450.3 151.3 L455 146.2" fill="none" stroke="#323130" stroke-width="1.6" /><text x="467.3" y="156.8" font-family="Liberation Sans" font-size="33.5" fill="#323130" transform="translate(467.3 156.8) scale(0.93 1) translate(-467.3 -156.8)">%</text><circle cx="523" cy="139.2" r="5.6" fill="#323130"/><path d="M528.3 139 C529 147 524 152.5 518 154.6" fill="none" stroke="#323130" stroke-width="2.6" stroke-linecap="round"/><circle cx="549" cy="141.8" r="1.1" fill="#323130"/><ellipse cx="556.5" cy="136.7" rx="3.1" ry="5.3" fill="none" stroke="#323130" stroke-width="1.7"/><ellipse cx="565.1" cy="136.7" rx="3.1" ry="5.3" fill="none" stroke="#323130" stroke-width="1.7"/><ellipse cx="565.1" cy="150.5" rx="3.1" ry="5.3" fill="none" stroke="#323130" stroke-width="1.7"/><circle cx="557.2" cy="155.7" r="1.1" fill="#323130"/><path d="M543.1 150.5 L558.2 150.5 M552 144.6 L558 150.5 L552 156.4" fill="none" stroke="#1e83d2" stroke-width="1.8" /><path d="M811 85.5 L792.6 85.5 L804.2 96.8 L792.6 107.9 L811 107.9" fill="none" stroke="#323130" stroke-width="2.2" stroke-linejoin="miter"/><path d="M811 84.4 L811 88.6 M811 108.9 L811 104.8" fill="none" stroke="#323130" stroke-width="2.2" /><path d="M792 131.3 L812 131.3 L812 156 L792 156 Z M792 143.6 L812 143.6" fill="none" stroke="#323130" stroke-width="1.8" /><path d="M799 135.8 L799 138 L805 138 L805 135.8 M799 148.1 L799 150.3 L805 150.3 L805 148.1" fill="none" stroke="#323130" stroke-width="1.4" /><rect x="1258.4" y="74.1" width="15.4" height="36.3" fill="#c8c6c4"/><path d="M1243 110.4 L1243 74.1 L1289.5 74.1 L1289.5 89.7" fill="none" stroke="#323130" stroke-width="2.2" /><path d="M1243 110.4 L1271 110.4" fill="none" stroke="#323130" stroke-width="2.2" /><path d="M1258.4 74.1 L1258.4 110.4 M1273.8 74.1 L1273.8 88.5 M1243 86.2 L1289.5 86.2 M1243 98.3 L1265 98.3" fill="none" stroke="#797775" stroke-width="1.6" /><path d="M1263.5 99.5 L1272.6 90.5 L1277 94.9" fill="none" stroke="#fff" stroke-width="2.5" /><path d="M1273.8 93.1 L1273.8 119.9 M1268.6 98.3 L1273.8 93.1 L1279 98.3" fill="none" stroke="#1e83d2" stroke-width="2" /><path d="M1287.7 92 L1287.7 119.2 M1282.5 114 L1287.7 119.2 L1292.9 114" fill="none" stroke="#1e83d2" stroke-width="2" /><path d="M1385.4 71 L1410 71 L1410 111.9 L1385.4 111.9 Z M1385.4 84.4 L1410 84.4 M1385.4 98.3 L1410 98.3" fill="none" stroke="#323130" stroke-width="2" /><path d="M1390.2 77.8 L1405.6 77.8 M1390.2 91.5 L1405.6 91.5 M1390.2 105.1 L1405.6 105.1" fill="none" stroke="#1e83d2" stroke-width="2" /><path d="M1363.1 84.7 L1377 84.7 L1377 98.3 L1363.1 98.3 Z" fill="none" stroke="#323130" stroke-width="2" /><path d="M1366.2 91.5 L1374.4 91.5 M1370.3 87.6 L1370.3 95.4" fill="none" stroke="#1e83d2" stroke-width="1.7" /><path d="M1381.4 71 L1370.4 71 L1370.4 81.8 M1370.4 101.6 L1370.4 111.9 L1381.4 111.9" fill="none" stroke="#797775" stroke-width="1.8" /><path d="M1499 82.9 L1518.1 82.9 L1518.1 101.8 L1499 101.8 Z M1526 68.8 L1545.2 68.8 L1545.2 88.2 L1526 88.2 Z M1526 96.9 L1545.2 96.9 L1545.2 116 L1526 116 Z" fill="none" stroke="#323130" stroke-width="2" /><path d="M1518.1 92 L1526 83.6 M1518.1 92 L1526 100.7" fill="none" stroke="#323130" stroke-width="2" /><path d="M1503.3 89.9 L1513.5 89.9 M1503.3 95 L1513.5 95 M1530.6 76 L1540.7 76 M1530.6 81.1 L1540.7 81.1 M1530.6 103.6 L1540.7 103.6 M1530.6 108.7 L1540.7 108.7" fill="none" stroke="#797775" stroke-width="1.6" /><rect x="1633" y="74.2" width="15.4" height="36.5" fill="#83bdea"/><path d="M1648.4 86.5 L1679.1 86.5 M1648.4 98.4 L1679.1 98.4 M1663.8 74.2 L1663.8 110.7" fill="none" stroke="#797775" stroke-width="1.6" /><path d="M1633 86.5 L1648.4 86.5 M1633 98.4 L1648.4 98.4 M1648.4 74.2 L1648.4 110.7" fill="none" stroke="#0a63b8" stroke-width="2" /><path d="M1633 74.2 L1679.1 74.2 L1679.1 110.7 L1633 110.7 Z" fill="none" stroke="#323130" stroke-width="2.2" /><path d="M23.8 234 L23.8 256.3 L46 256.3" fill="none" stroke="#797775" stroke-width="1.8" /><path d="M27.3 253.5 L27.3 238.3 L30.9 238.3 L30.9 253.5 Z M33.6 253.5 L33.6 241.7 L37.4 241.7 L37.4 253.5 Z M40.5 253.5 L40.5 235.3 L44.2 235.3 L44.2 253.5 Z" fill="none" stroke="#797775" stroke-width="1.5" /><path d="M22.2 300.2 L48 300.2 L48 324.2 L22.2 324.2 Z" fill="none" stroke="#000" stroke-width="2.2" /><path d="M22.2 303.3 L48 303.3" fill="none" stroke="#000" stroke-width="1.4" /><path d="M22.2 310.5 L48 310.5 M22.2 317.3 L48 317.3 M30.8 303.3 L30.8 324.2 M39.4 303.3 L39.4 324.2" fill="none" stroke="#000" stroke-width="1.9" /><path d="M19.8 375.8 L32.4 375.8 L32.4 387.6 L19.8 387.6 Z M19.8 381.6 L32.4 381.6 M37.4 366.6 L50.1 366.6 L50.1 378.8 L37.4 378.8 Z M37.4 372.5 L50.1 372.5 M37.4 383.7 L50.1 383.7 L50.1 396 L37.4 396 Z M37.4 389.7 L50.1 389.7" fill="none" stroke="#797775" stroke-width="1.8" /><path d="M27.4 375.8 L27.4 370.3 L37.4 370.3 M27.4 387.6 L27.4 391.8 L37.4 391.8" fill="none" stroke="#797775" stroke-width="1.8" /><path d="M25.4 453.5 L25.4 440 Q25.4 437.3 28 437.3 L36 437.3 L42 443.2 L42 453" fill="none" stroke="#797775" stroke-width="1.6" /><path d="M36 437.3 L36 443.2 L42 443.2" fill="none" stroke="#797775" stroke-width="1.4" /><path d="M44.6 446.5 L45.5 447 Q46.6 448 46.6 450 L46.6 458 Q46.6 462.6 42 462.6 L41.5 462.6" fill="none" stroke="#797775" stroke-width="1.6" /><text x="17.6" y="463.8" font-family="Liberation Sans" font-weight="700" font-size="11.2" fill="#797775" letter-spacing="0.3">DAX</text><path d="M25.4 521.5 L25.4 508 Q25.4 505.3 28 505.3 L36.5 505.3 L43.8 512.2 L43.8 521.5" fill="none" stroke="#797775" stroke-width="1.6" /><path d="M36.5 505.3 L36.5 512.2 L43.8 512.2" fill="none" stroke="#797775" stroke-width="1.4" /><text x="18.8" y="532.2" font-family="Liberation Sans" font-weight="700" font-size="11.2" fill="#797775" letter-spacing="0.2">TMDL</text><path d="M97.3 231 L121.5 254.7 M121.5 231 L97.3 254.7" fill="none" stroke="#a80000" stroke-width="2.2" /><path d="M147.6 243.3 L156.6 253 L178.4 231.3" fill="none" stroke="#107c10" stroke-width="2.2" /></svg><svg style="position:absolute;left:0;top:0;mix-blend-mode:darken" width="1757" height="791" viewBox="0 0 1757 791"><path d="M940.9 306.8 Q970 308 1000 310.2 L1016.8 310.6 L1016.8 336.4 L1000 336.4 Q970 334.5 940.9 333 Z" fill="#ffe500"/><path d="M948.8 348.2 Q975 349 1000 349.2 L1015.3 349.2 L1015.3 375.5 L1000 375.5 Q975 375 948.8 374.8 Z" fill="#ffe500"/><path d="M944 385.7 L1016.8 385.7 L1016.8 412 L944 412 Z" fill="#ffe500"/><path d="M1132.3 313.7 Q1132.3 310.6 1135 310.6 Q1140 313.5 1160 313.7 L1191 313.7 L1191 339 L1160 339 Q1135 338.5 1132.3 336 Z" fill="#ffe500"/><path d="M1127.8 346.7 L1189.2 346.7 L1189.2 372.5 L1127.8 372.5 Z" fill="#ffe500"/><path d="M1127.8 382.7 L1203.5 382.7 L1203.5 408.3 L1127.8 408.3 Z" fill="#ffe500"/></svg>
</body></html>
